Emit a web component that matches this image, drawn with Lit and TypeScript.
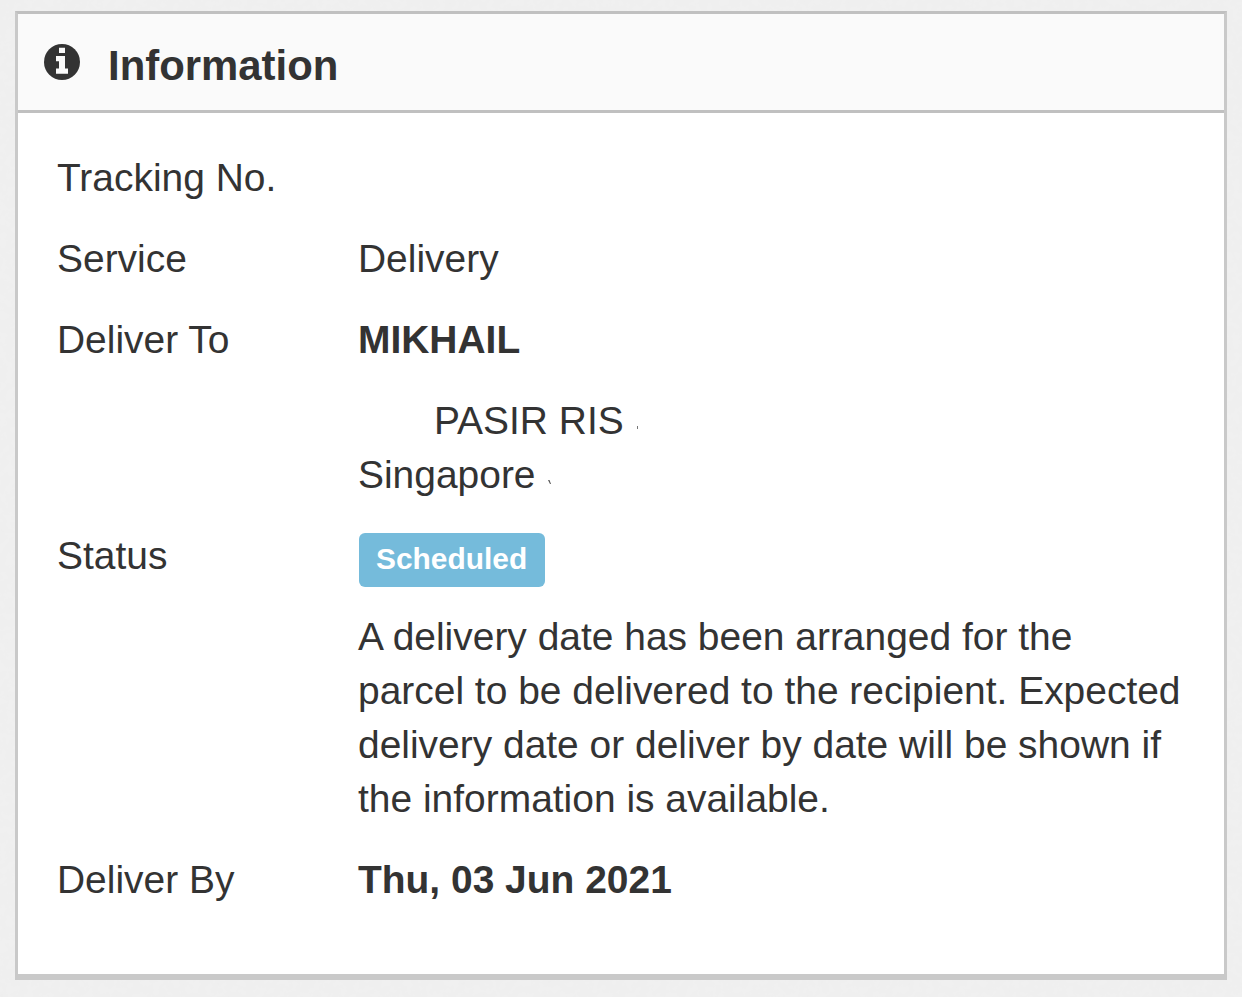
import { LitElement, html, css } from 'lit';
import { customElement, property } from 'lit/decorators.js';

@customElement('info-row')
class InfoRow extends LitElement {
  @property() label = '';

  static styles = css`
    :host {
      display: grid;
      grid-template-columns: 301px 1fr;
      margin-bottom: 27px;
    }
  `;

  render() {
    return html`
      <div>${this.label}</div>
      <div><slot></slot></div>
    `;
  }
}

@customElement('app-root')
class AppRoot extends LitElement {
  static styles = css`
    :host {
      display: block;
      position: relative;
      box-sizing: border-box;
      height: 997px;
      padding: 11px 15px 17px;
      background: #f0f0f0;
      color: #333;
      font-family: 'Liberation Sans', Arial, sans-serif;
      font-size: 38.95px;
      line-height: 54px;
      overflow: hidden;
    }

    .texture {
      position: absolute;
      inset: 0;
      width: 100%;
      height: 100%;
    }

    .box {
      position: relative;
      box-sizing: border-box;
      height: 969px;
      border: 3px solid #c9c9c9;
      border-top-color: #c0c0c0;
      border-bottom-width: 6px;
      background: #fff;
    }

    .header {
      display: flex;
      align-items: center;
      box-sizing: border-box;
      height: 99px;
      padding-left: 26px;
      border-bottom: 3px solid #c0c0c0;
      background: #fafafa;
    }

    .icon {
      width: 36px;
      height: 36px;
      margin-right: 28px;
    }

    .title {
      margin: 7px 0 0;
      font-size: 41.9px;
      font-weight: bold;
    }

    .content {
      padding: 38px 30px 0 39px;
    }

    .address {
      margin-top: 27px;
    }

    .line {
      display: flex;
      align-items: center;
    }

    .street {
      padding-left: 76px;
    }

    .mark {
      width: 3px;
      height: 5px;
      margin: 15px 0 0 12px;
    }

    .label {
      display: block;
      box-sizing: border-box;
      width: fit-content;
      height: 54px;
      margin: 4px 0 0 1px;
      padding: 0 18px 0 17px;
      border-radius: 6px;
      background: #75bbdb;
      color: #fff;
      font-size: 29.9px;
      font-weight: bold;
      line-height: 52px;
    }

    .description {
      margin-top: 23px;
      white-space: nowrap;
    }
  `;

  render() {
    return html`
      <svg class="texture">
        <filter id="paper">
          <feTurbulence type="fractalNoise" baseFrequency="0.15" numOctaves="3" />
          <feColorMatrix values="0 0 0 0 0.8  0 0 0 0 0.8  0 0 0 0 0.8  0.3 0 0 0 -0.08" />
        </filter>
        <rect width="100%" height="100%" filter="url(#paper)" />
      </svg>
      <div class="box">
        <div class="header">
          <svg class="icon" viewBox="0 0 36 36">
            <circle cx="18" cy="18" r="18" fill="#333" />
            <path d="M15 3.7h6V9h-6zM12 12h9v12.5h3v5.2H12v-5.2h3v-7.2h-3z" fill="#fafafa" />
          </svg>
          <h2 class="title">Information</h2>
        </div>
        <div class="content">
          <info-row label="Tracking No."></info-row>
          <info-row label="Service">Delivery</info-row>
          <info-row label="Deliver To">
            <b>MIKHAIL</b>
            <div class="address">
              <div class="line street">
                PASIR RIS
                <svg class="mark" viewBox="0 0 3 5"><path d="M1 0h1v3H1z" fill="#777" /></svg>
              </div>
              <div class="line">
                Singapore
                <svg class="mark" viewBox="0 0 3 5"><path d="M0 0h1.5l1.5 4H2z" fill="#555" /></svg>
              </div>
            </div>
          </info-row>
          <info-row label="Status">
            <span class="label">Scheduled</span>
            <div class="description">
              A delivery date has been arranged for the<br />
              parcel to be delivered to the recipient. Expected<br />
              delivery date or deliver by date will be shown if<br />
              the information is available.
            </div>
          </info-row>
          <info-row label="Deliver By"><b>Thu, 03 Jun 2021</b></info-row>
        </div>
      </div>
    `;
  }
}
